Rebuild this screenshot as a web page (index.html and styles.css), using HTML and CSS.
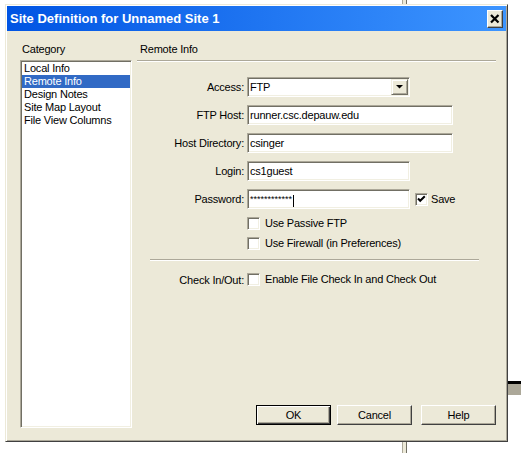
FILE: index.html
```html
<!DOCTYPE html>
<html>
<head>
<meta charset="utf-8">
<title>Site Definition for Unnamed Site 1</title>
<link rel="stylesheet" href="styles.css">
</head>
<body>
<div class="desk-split desk-top"></div>
<div class="desk-split desk-bottom"></div>
<div class="desk-bar"></div>

<div class="dialog">
  <div class="titlebar">
    <span class="title">Site Definition for Unnamed Site 1</span>
    <div class="close">
      <svg width="16" height="18" viewBox="0 0 16 18"><path d="M4 5 L11.5 12.5 M11.5 5 L4 12.5" stroke="#000" stroke-width="2.2" fill="none"/></svg>
    </div>
  </div>
  <div class="client">
    <div class="cat-col">
      <div class="cat-label">Category</div>
      <ul class="listbox">
        <li>Local Info</li>
        <li class="sel">Remote Info</li>
        <li>Design Notes</li>
        <li>Site Map Layout</li>
        <li>File View Columns</li>
      </ul>
    </div>
    <div class="panel">
      <div class="panel-head">Remote Info</div>
      <div class="form">
        <div class="row">
          <span class="lbl">Access:</span>
          <div class="field select w163"><span class="val">FTP</span><span class="drop"><svg width="15" height="14" viewBox="0 0 15 14"><path d="M4 5 H11 L7.5 8.5 Z" fill="#000"/></svg></span></div>
        </div>
        <div class="row">
          <span class="lbl">FTP Host:</span>
          <div class="field w206">runner.csc.depauw.edu</div>
        </div>
        <div class="row">
          <span class="lbl">Host Directory:</span>
          <div class="field w206">csinger</div>
        </div>
        <div class="row">
          <span class="lbl">Login:</span>
          <div class="field w163">cs1guest</div>
        </div>
        <div class="row">
          <span class="lbl">Password:</span>
          <div class="field w163"><span class="stars">************</span><span class="caret"></span></div>
          <span class="chk save"><svg width="11" height="11" viewBox="0 0 11 11"><path d="M2 4.5 L4.2 6.8 L8.8 2.2" stroke="#000" stroke-width="2" fill="none"/></svg></span>
          <span class="chk-text save-text">Save</span>
        </div>
        <div class="chk-row first">
          <span class="chk"></span><span class="chk-text">Use Passive FTP</span>
        </div>
        <div class="chk-row second">
          <span class="chk"></span><span class="chk-text">Use Firewall (in Preferences)</span>
        </div>
        <div class="sep"></div>
        <div class="row checkin">
          <span class="lbl">Check In/Out:</span>
          <span class="chk"></span><span class="chk-text">Enable File Check In and Check Out</span>
        </div>
      </div>
      <div class="buttons">
        <div class="btn default">OK</div>
        <div class="btn cancel">Cancel</div>
        <div class="btn">Help</div>
      </div>
    </div>
  </div>
</div>
</body>
</html>
```
FILE: styles.css
```css
* { box-sizing: border-box; }
html, body { margin: 0; }
body {
  position: relative;
  width: 521px;
  height: 453px;
  overflow: hidden;
  padding: 4px 0 0 5px;
  background: #fff;
  font-family: "Liberation Sans", Arial, sans-serif;
  font-size: 11px;
  letter-spacing: -0.2px;
  color: #000;
}

/* background desktop bits behind the dialog */
.desk-split {
  position: absolute;
  left: 402px;
  width: 5px;
  background: #ece9d8;
  border-left: 1px solid #aca899;
  border-right: 1px solid #716f64;
}
.desk-top { top: 0; height: 4px; }
.desk-bottom { top: 442px; height: 11px; }
.desk-bar {
  position: absolute;
  left: 508px;
  top: 381px;
  width: 13px;
  height: 14px;
  background: #aca899;
  border-top: 3px solid #000;
}

.dialog {
  width: 503px;
  height: 438px;
  background: #ece9d8;
  border: 1px solid;
  border-color: #ece9d8 #404040 #404040 #ece9d8;
  box-shadow: inset 1px 1px #fff, inset -1px -1px #aca899;
  padding: 1px;
  display: flex;
  flex-direction: column;
}

.titlebar {
  height: 25px;
  flex: none;
  display: flex;
  align-items: center;
  padding: 0 3px 0 3px;
  background: linear-gradient(to right, #0054e3, #3d95ff);
}
.title {
  flex: 1;
  color: #fff;
  font-weight: bold;
  font-size: 13px;
  letter-spacing: 0;
}
.close {
  width: 16px;
  height: 18px;
  background: #ece9d8;
  border: 1px solid;
  border-color: #fff #404040 #404040 #fff;
  box-shadow: inset -1px -1px #aca899;
  position: relative;
}
.close svg { display: block; margin: -1px 0 0 -1px; }

.client {
  flex: 1;
  display: flex;
  padding: 12px 10px 12px 13px;
}

.cat-col {
  width: 112px;
  flex: none;
  display: flex;
  flex-direction: column;
}
.cat-label {
  height: 13px;
  line-height: 13px;
  padding-left: 2px;
  margin-bottom: 4px;
}
.listbox {
  flex: 1;
  list-style: none;
  margin: 0;
  padding: 1px;
  background: #fff;
  border: 1px solid;
  border-color: #aca899 #fff #fff #aca899;
  box-shadow: inset 1px 1px #716f64, inset -1px -1px #f1efe2;
}
.listbox li {
  height: 13px;
  line-height: 13px;
  padding-left: 2px;
  white-space: nowrap;
}
.listbox li.sel { background: #316ac5; color: #fff; }

.panel {
  flex: 1;
  margin-left: 5px;
  display: flex;
  flex-direction: column;
}
.panel-head {
  line-height: 13px;
  padding: 0 0 4px 3px;
  border-bottom: 1px solid #aca899;
  box-shadow: 0 1px #fff;
}

.form { margin-top: 16px; }
.row {
  display: flex;
  align-items: center;
  height: 20px;
}
.row + .row { margin-top: 8px; }
.lbl {
  width: 107px;
  flex: none;
  text-align: right;
  margin-right: 3px;
  white-space: nowrap;
}
.field {
  height: 20px;
  flex: none;
  background: #fff;
  border: 1px solid;
  border-color: #aca899 #fff #fff #aca899;
  box-shadow: inset 1px 1px #716f64, inset -1px -1px #f1efe2;
  padding: 0 0 0 2px;
  line-height: 18px;
  white-space: nowrap;
}
.w163 { width: 163px; }
.w206 { width: 206px; }

.select {
  display: flex;
  align-items: center;
  padding: 1px 1px 1px 2px;
  line-height: 16px;
}
.select .val { flex: 1; }
.drop {
  width: 17px;
  height: 16px;
  background: #ece9d8;
  border: 1px solid;
  border-color: #f1efe2 #716f64 #716f64 #f1efe2;
  box-shadow: inset 1px 1px #fff, inset -1px -1px #aca899;
}
.drop svg { display: block; }

.stars {
  font-size: 9px;
  letter-spacing: 0;
  vertical-align: 3px;
}
.caret {
  display: inline-block;
  width: 1px;
  height: 12px;
  background: #000;
  vertical-align: -2px;
  margin-left: 1px;
}

.chk {
  width: 13px;
  height: 13px;
  flex: none;
  background: #fff;
  border: 1px solid;
  border-color: #aca899 #fff #fff #aca899;
  box-shadow: inset 1px 1px #716f64, inset -1px -1px #f1efe2;
}
.chk svg { display: block; }
.chk-text { margin-left: 5px; white-space: nowrap; line-height: 13px; }
.save { margin-left: 5px; }
.save-text { margin-left: 3px; }

.chk-row {
  display: flex;
  align-items: center;
  height: 13px;
  margin-left: 110px;
}
.chk-row.first { margin-top: 8px; }
.chk-row.second { margin-top: 7px; }

.sep {
  height: 1px;
  background: #aca899;
  box-shadow: 0 1px #fff;
  margin: 9px 17px 0 13px;
}
.row.checkin { height: 13px; margin-top: 13px; }

.buttons {
  margin-top: auto;
  margin-bottom: 3px;
  display: flex;
  justify-content: flex-end;
}
.btn {
  width: 75px;
  height: 20px;
  line-height: 18px;
  text-align: center;
  background: #ece9d8;
  border: 1px solid;
  border-color: #fff #404040 #404040 #fff;
  box-shadow: inset -1px -1px #aca899;
}
.btn.default {
  margin-right: 6px;
  border-color: #000;
  box-shadow: inset 1px 1px #fff, inset -1px -1px #404040, inset -2px -2px #aca899;
}
.btn.cancel { margin-right: 9px; }
```
